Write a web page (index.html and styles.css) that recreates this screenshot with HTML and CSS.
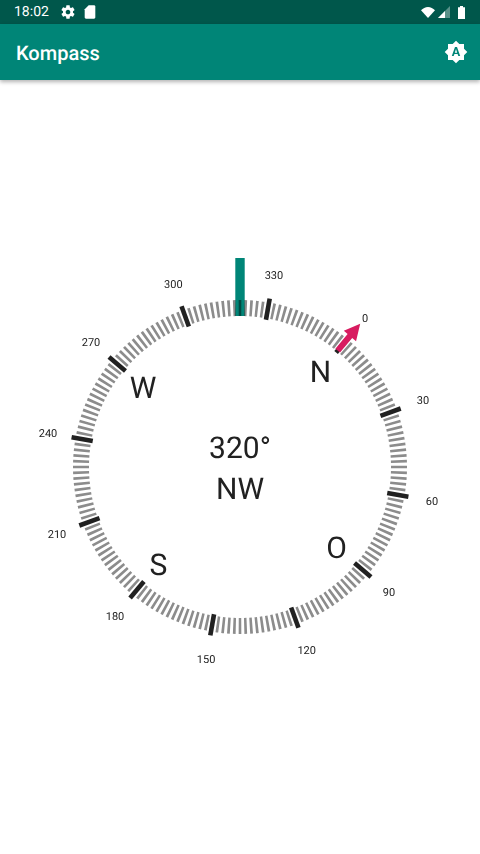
FILE: index.html
```html
<!DOCTYPE html>
<html lang="de">
<head>
    <meta charset="UTF-8">
    <title>Kompass</title>
    <link rel="stylesheet" href="styles.css">
</head>
<body>
    <div class="status-bar">
        <span class="clock">18:02</span>
        <svg class="status-icon gear" viewBox="0 0 24 24"><path d="M19.43 12.98c.04-.32.07-.64.07-.98s-.03-.66-.07-.98l2.11-1.65c.19-.15.24-.42.12-.64l-2-3.46c-.12-.22-.39-.3-.61-.22l-2.49 1c-.52-.4-1.08-.73-1.69-.98l-.38-2.65C14.46 2.18 14.25 2 14 2h-4c-.25 0-.46.18-.49.42l-.38 2.65c-.61.25-1.17.59-1.69.98l-2.49-1c-.23-.09-.49 0-.61.22l-2 3.46c-.13.22-.07.49.12.64l2.11 1.65c-.04.32-.07.65-.07.98s.03.66.07.98l-2.11 1.65c-.19.15-.24.42-.12.64l2 3.46c.12.22.39.3.61.22l2.49-1c.52.4 1.08.73 1.69.98l.38 2.65c.03.24.24.42.49.42h4c.25 0 .46-.18.49-.42l.38-2.65c.61-.25 1.17-.59 1.69-.98l2.49 1c.23.09.49 0 .61-.22l2-3.46c.12-.22.07-.49-.12-.64l-2.11-1.65zM12 15.5c-1.93 0-3.5-1.57-3.5-3.5s1.57-3.5 3.5-3.5 3.5 1.57 3.5 3.5-1.57 3.5-3.5 3.5z"/></svg>
        <svg class="status-icon card" viewBox="0 0 24 24"><path d="M18 2h-8L4.02 8 4 20c0 1.1.9 2 2 2h12c1.1 0 2-.9 2-2V4c0-1.1-.9-2-2-2z"/></svg>
        <span class="spacer"></span>
        <svg class="wifi" viewBox="0 0 14 11"><path d="M0 3.2C2 1.3 4.4 0 7 0s5 1.3 7 3.2L7 11z"/></svg>
        <svg class="signal" viewBox="0 0 12 12"><path class="signal-empty" d="M12 0v12H0z"/><path d="M7 5v7H0z"/></svg>
        <svg class="battery" viewBox="0 0 7 13"><path d="M2 0h3v1.2h2V13H0V1.2h2z"/></svg>
    </div>

    <header class="app-bar">
        <h1>Kompass</h1>
        <svg class="auto-icon" viewBox="0 0 24 24"><path d="M10.85 12.65h2.3L12 9l-1.15 3.65zM20 8.69V4h-4.69L12 .69 8.69 4H4v4.69L.69 12 4 15.31V20h4.69L12 23.31 15.31 20H20v-4.69L23.31 12 20 8.69zM14.3 16l-.7-2h-3.2l-.7 2H7.8L11 7h2l3.2 9h-1.9z"/></svg>
    </header>

    <main class="content">
        <svg class="compass" viewBox="-240 -240 480 480" width="480" height="480">
            <!-- one dash every 2 degrees -->
            <circle class="minor-ticks" r="159" pathLength="360"/>

            <g class="major-ticks">
                <line y1="-149.5" y2="-171" transform="rotate(40)"/>
                <line y1="-149.5" y2="-171" transform="rotate(70)"/>
                <line y1="-149.5" y2="-171" transform="rotate(100)"/>
                <line y1="-149.5" y2="-171" transform="rotate(130)"/>
                <line y1="-149.5" y2="-171" transform="rotate(160)"/>
                <line y1="-149.5" y2="-171" transform="rotate(190)"/>
                <line y1="-149.5" y2="-171" transform="rotate(220)"/>
                <line y1="-149.5" y2="-171" transform="rotate(250)"/>
                <line y1="-149.5" y2="-171" transform="rotate(280)"/>
                <line y1="-149.5" y2="-171" transform="rotate(310)"/>
                <line y1="-149.5" y2="-171" transform="rotate(340)"/>
                <line y1="-149.5" y2="-171" transform="rotate(10)"/>
            </g>

            <g class="degree-labels">
                <text x="125" y="-145">0</text>
                <text x="183" y="-63">30</text>
                <text x="192" y="38">60</text>
                <text x="149" y="129">90</text>
                <text x="66.7" y="187">120</text>
                <text x="-33.9" y="196">150</text>
                <text x="-125" y="153">180</text>
                <text x="-183" y="71">210</text>
                <text x="-192" y="-30">240</text>
                <text x="-149" y="-121">270</text>
                <text x="-66.7" y="-179">300</text>
                <text x="33.9" y="-188">330</text>
            </g>

            <g class="big-text">
                <text x="80.5" y="-85">N</text>
                <text x="96.5" y="91">O</text>
                <text x="-81.5" y="108">S</text>
                <text x="-97" y="-69">W</text>
                <text y="-9">320°</text>
                <text y="32">NW</text>
            </g>

            <rect class="heading" x="-4.7" y="-209" width="9.4" height="58"/>
            <path class="north" transform="rotate(40)" d="M-3 -152V-171H-8L0 -187 8 -171H3V-152z"/>
        </svg>
    </main>
</body>
</html>
```

FILE: styles.css
```css
* {
    box-sizing: border-box;
}

html, body {
    height: 100%;
}

body {
    display: flex;
    flex-direction: column;
    margin: 0;
    background-color: #ffffff;
    color: #212121;
    font-family: 'Roboto', sans-serif;
    text-rendering: geometricPrecision;
}

.status-bar {
    display: flex;
    align-items: center;
    flex: none;
    height: 24px;
    padding: 0 15px 0 14px;
    background-color: #00574b;
    color: #ffffff;
    fill: #ffffff;
}

.clock {
    font-size: 14px;
}

.status-icon {
    width: 16px;
    height: 16px;
}

.gear {
    margin-left: 11px;
}

.card {
    margin-left: 6px;
}

.spacer {
    flex: 1;
}

.wifi {
    width: 14px;
    height: 11px;
}

.signal {
    width: 12px;
    height: 12px;
    margin-left: 3px;
}

.signal-empty {
    opacity: 0.35;
}

.battery {
    width: 7px;
    height: 13px;
    margin-left: 8px;
}

.app-bar {
    position: relative;
    display: flex;
    align-items: center;
    justify-content: space-between;
    flex: none;
    height: 56px;
    padding: 0 12px 0 16px;
    background-color: #008577;
    color: #ffffff;
    box-shadow: 0 2px 4px rgba(0, 0, 0, 0.3);
}

.app-bar h1 {
    margin: 0;
    padding-top: 2px;
    font-size: 20px;
    font-weight: 500;
}

.auto-icon {
    width: 24px;
    height: 24px;
    fill: #ffffff;
}

.content {
    display: flex;
    align-items: center;
    justify-content: center;
    flex: 1;
}

.compass {
    will-change: transform;
}

.minor-ticks {
    fill: none;
    stroke: #8c8c8c;
    stroke-width: 16;
    stroke-dasharray: 0.95 1.05;
    stroke-dashoffset: 0.475;
}

.major-ticks line {
    stroke: #212121;
    stroke-width: 4.6;
}

.degree-labels text {
    font-size: 11px;
    text-anchor: middle;
    fill: #212121;
}

.big-text text {
    font-size: 30px;
    text-anchor: middle;
    fill: #212121;
}

.heading {
    fill: #008577;
    mix-blend-mode: multiply;
}

.north {
    fill: #d81b60;
}
```
